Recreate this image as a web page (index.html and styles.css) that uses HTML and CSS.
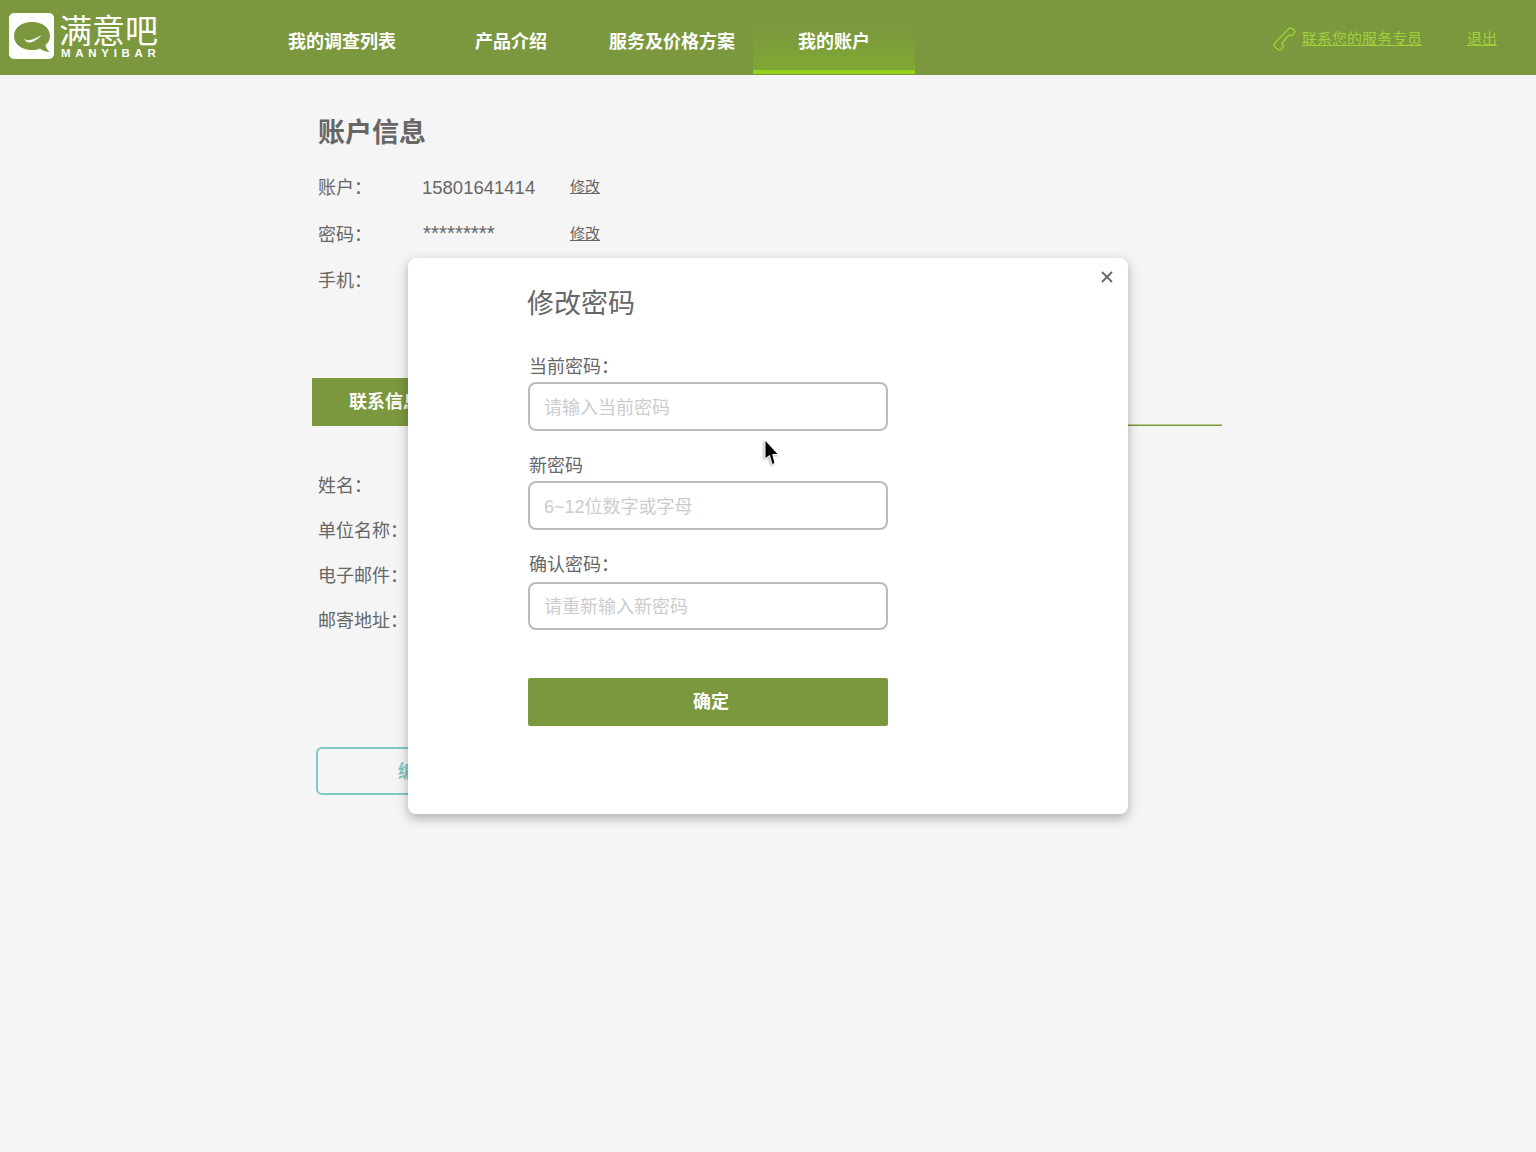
FILE: index.html
```html
<!DOCTYPE html>
<html lang="zh-CN">
<head>
<meta charset="utf-8">
<title>满意吧 - 账户信息</title>
<link rel="stylesheet" href="styles.css">
</head>
<body>
<header class="topbar">
  <a class="logo">
    <svg class="logo-mark" viewBox="0 0 45 46" width="45" height="46">
      <rect width="45" height="46" rx="5" fill="#fff"/>
      <path d="M23 9C12.500 9 5 15 5 23C5 31 12.500 37 23 37C26.500 37 29 36.500 31 35.500C33.500 37.500 37 39 41 39C38.500 37.500 37 35 36.500 32C39.500 29.500 41 26.500 41 23C41 15 33.500 9 23 9Z" fill="#7b983e"/>
      <path d="M15 25.500C16.500 27 18.500 27.500 21 27C25 26.200 29 24 33 22C29 25.500 25 29.500 20.500 29.500C17.500 29.500 16 27.500 15 25.500Z" fill="#fff"/>
    </svg>
    <span class="logo-text">
      <span class="logo-cn">满意吧</span>
      <span class="logo-en">MANYIBAR</span>
    </span>
  </a>
  <nav class="nav">
    <a class="nav-item nav-w1">我的调查列表</a>
    <a class="nav-item nav-w2">产品介绍</a>
    <a class="nav-item nav-w3">服务及价格方案</a>
    <a class="nav-item nav-w3 nav-active">我的账户</a>
  </nav>
  <div class="top-right">
    <svg class="phone" viewBox="0 0 24 24" width="24" height="24">
      <path d="M16.500 2C17.500 0.800 19 0.800 20.500 1.800L22 3C23 4 23 5 22.300 6L20.500 8.200C20 8.900 19 8.900 18.400 8.400L17.200 7.500L9.800 16.800L11 17.800C11.600 18.300 11.700 19.200 11.200 19.800L9.300 22.200C8.500 23.200 7 23.200 6 22.400L3 20C2 19.200 1.600 17.800 2.400 16.600Z" fill="none" stroke="#9ccf35" stroke-width="1.500" stroke-linejoin="round"/>
    </svg>
    <a class="top-link service">联系您的服务专员</a>
    <a class="top-link">退出</a>
  </div>
</header>

<main class="page">
  <h1 class="page-title">账户信息</h1>
  <section class="account">
    <div class="acc-row"><span class="label">账户：</span><span class="value">15801641414</span><a class="edit">修改</a></div>
    <div class="acc-row"><span class="label">密码：</span><span class="value stars">*********</span><a class="edit">修改</a></div>
    <div class="acc-row"><span class="label">手机：</span></div>
  </section>
  <div class="section-head"><span class="section-tab">联系信息</span></div>
  <section class="contact">
    <div class="con-row">姓名：</div>
    <div class="con-row">单位名称：</div>
    <div class="con-row">电子邮件：</div>
    <div class="con-row">邮寄地址：</div>
  </section>
  <button class="btn-edit" type="button">编辑</button>
</main>

<div class="modal">
  <svg class="close" viewBox="0 0 12 12" width="12" height="12">
    <path d="M1 1L11 11M11 1L1 11" stroke="#666" stroke-width="1.800" fill="none"/>
  </svg>
  <h2 class="modal-title">修改密码</h2>
  <form class="form">
    <label class="field-label">当前密码：</label>
    <input class="field f1" type="password" placeholder="请输入当前密码">
    <label class="field-label">新密码</label>
    <input class="field f2" type="password" placeholder="6~12位数字或字母">
    <label class="field-label">确认密码：</label>
    <input class="field f3" type="password" placeholder="请重新输入新密码">
    <button class="btn-ok" type="button">确定</button>
  </form>
</div>

<svg class="cursor" viewBox="0 0 16 27" width="16" height="27">
  <path d="M2 1V20L6.500 16.500L9 25.500L12 24.500L9.800 15.500H15.500Z" fill="#000" stroke="#fff" stroke-width="1"/>
</svg>
</body>
</html>
```
FILE: styles.css
```css
* { box-sizing: border-box; }
html, body { margin: 0; height: 1152px; overflow: hidden; }
body {
  background: #f5f5f5;
  color: #666;
  font-family: "Liberation Sans", "Noto Sans CJK SC", sans-serif;
  font-size: 18px;
  position: relative;
}
.topbar {
  height: 75px;
  background: #7b983e;
  display: flex;
  align-items: stretch;
}
.logo {
  width: 253px;
  padding: 13px 0 0 9px;
  display: flex;
  align-items: flex-start;
  color: #fff;
}
.logo-mark { flex: none; }
.logo-text { display: flex; flex-direction: column; margin-left: 6px; }
.logo-cn { font-size: 33px; line-height: 35px; margin: 1px 0 0 -1px; white-space: nowrap; font-weight: 400; }
.logo-en { font-size: 11.500px; line-height: 13px; letter-spacing: 4.700px; font-weight: 700; margin: -2px 0 0 1px; white-space: nowrap; }
.nav { display: flex; }
.nav-item {
  color: #fff;
  font-weight: 700;
  font-size: 18px;
  line-height: 26px;
  padding-top: 29px;
  text-align: center;
  white-space: nowrap;
}
.nav-w1 { width: 178px; }
.nav-w2 { width: 160px; }
.nav-w3 { width: 162px; }
.nav-active {
  height: 74px;
  background: linear-gradient(to bottom, #7b983e 28px, #7fa834 70px);
  border-bottom: 4px solid #94d01c;
}
.top-right {
  margin-left: auto;
  padding: 27px 39px 0 0;
  display: flex;
  align-items: flex-start;
}
.phone { margin: 0 6px 0 0; }
.top-link {
  color: #a0d13c;
  font-size: 15px;
  line-height: 24px;
  text-decoration: underline;
}
.service { margin-right: 45px; }

.page { width: 910px; margin-left: 312px; }
.page-title {
  margin: 0;
  padding: 40px 0 0 6px;
  font-size: 27px;
  line-height: 36px;
  font-weight: 700;
  color: #666;
}
.account { padding: 23px 0 0 6px; }
.acc-row { height: 46.500px; display: flex; align-items: flex-start; line-height: 28px; }
.label { width: 104px; flex: none; }
.value { width: 148px; flex: none; font-weight: 300; font-size: 18.500px; }
.stars { font-size: 20.500px; line-height: 24px; padding-left: 1px; }
.edit { font-size: 15px; text-decoration: underline; line-height: 26px; }
.section-head {
  margin-top: 64.500px;
  height: 48px;
  border-bottom: 1px solid #7b983e;
  box-shadow: inset 0 -1px 0 #b9cb8e;
}
.section-tab {
  display: block;
  width: 180px;
  height: 48px;
  padding-left: 37px;
  background: #7b983e;
  color: #fff;
  font-weight: 700;
  line-height: 48px;
}
.contact { padding: 46px 0 0 6px; }
.con-row { height: 45px; line-height: 29px; }
.btn-edit {
  display: block;
  margin: 95px 0 0 4px;
  width: 200px;
  height: 48px;
  background: transparent;
  border: 2px solid #7fc9c5;
  border-radius: 6px;
  color: #7fc9c5;
  padding: 0 0 2px;
  font: 700 18px "Liberation Sans", "Noto Sans CJK SC", sans-serif;
}

.modal {
  position: absolute;
  left: 408px;
  top: 258px;
  width: 720px;
  height: 556px;
  background: #fff;
  border-radius: 8px;
  box-shadow: 0 4px 12px rgba(0, 0, 0, .3);
  padding: 27px 0 0 120px;
}
.close { position: absolute; right: 15px; top: 13px; }
.modal-title {
  margin: 0 0 0 -1px;
  font-size: 27px;
  line-height: 38px;
  font-weight: 400;
  color: #666;
}
.form { display: flex; flex-direction: column; width: 360px; padding-top: 29px; }
.field-label { display: block; padding-left: 1px; line-height: 30px; color: #666; }
.field {
  display: block;
  width: 360px;
  height: 49px;
  border: 2px solid #bbb;
  border-radius: 8px;
  padding: 3px 15px 0 14px;
  background: #fff;
  font: 18px "Liberation Sans", "Noto Sans CJK SC", sans-serif;
  outline: none;
}
.field::placeholder { color: #ccc; opacity: 1; }
.f1 { margin-bottom: 20px; }
.f2 { margin-bottom: 20px; }
.f3 { height: 48px; margin-top: 2px; }
.btn-ok {
  margin-top: 48px;
  width: 360px;
  height: 48px;
  border: 0;
  border-radius: 2px;
  background: #7b983e;
  color: #fff;
  padding: 0 0 4px 6px;
  font: 700 18px "Liberation Sans", "Noto Sans CJK SC", sans-serif;
}
.cursor {
  position: absolute;
  left: 763px;
  top: 439px;
  filter: drop-shadow(-1px 1px 1px rgba(0, 0, 0, .3));
}
```
